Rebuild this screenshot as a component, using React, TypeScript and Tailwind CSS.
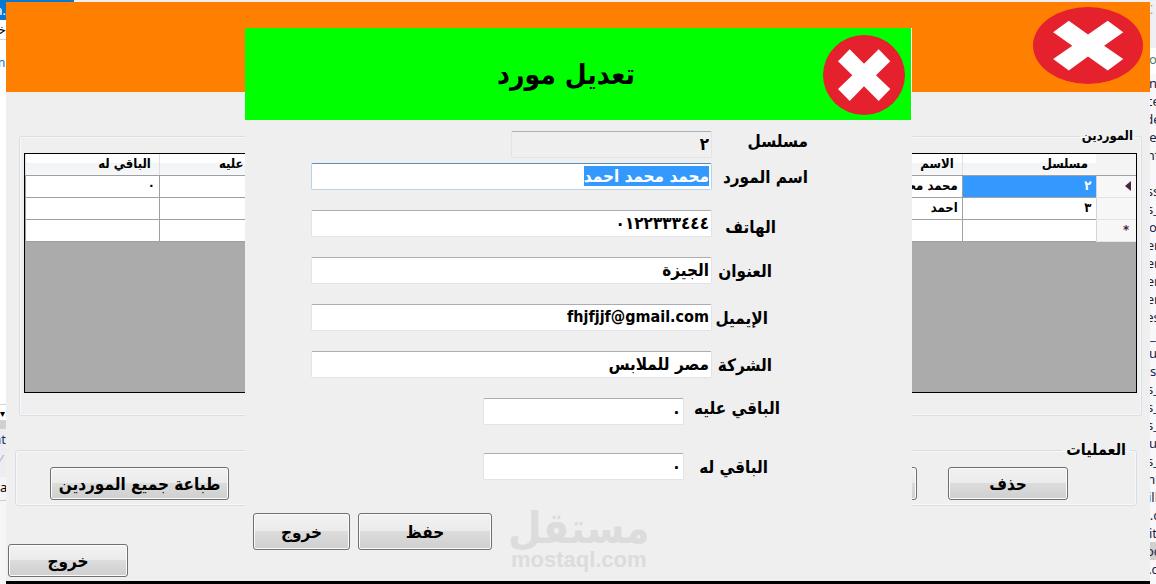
import { useEffect, useRef } from 'react'
import type { ReactNode } from 'react'

interface Supplier {
  id: string
  name: string
  phone: string
  address: string
  email: string
  company: string
  owed: string
  due: string
}

const COLUMNS: { key: keyof Supplier; title: string }[] = [
  { key: 'id', title: 'مسلسل' },
  { key: 'name', title: 'الاسم' },
  { key: 'phone', title: 'الهاتف' },
  { key: 'address', title: 'العنوان' },
  { key: 'email', title: 'الإيميل' },
  { key: 'company', title: 'الشركة' },
  { key: 'owed', title: 'الباقي عليه' },
  { key: 'due', title: 'الباقي له' },
]

const SUPPLIERS: Supplier[] = [
  { id: '٢', name: 'محمد محمد احمد', phone: '', address: '', email: '', company: '', owed: '', due: '٠' },
  { id: '٣', name: 'احمد', phone: '', address: '', email: '', company: '', owed: '', due: '' },
  { id: '', name: '', phone: '', address: '', email: '', company: '', owed: '', due: '' },
]

const EDITOR_LINES = [
  'n', 'ce', 'de', 'e', 'nf', '', 'ss', 's_', 'o', 'er', 'er', 'er', 'er', 'es', '_', 'u', 's',
  's_', 's_', 's_', 'u', 's_', 'n.', 'ill', ':.c', 'it', 'oc', '.c',
]

function CloseIcon({ className }: { className: string }) {
  return (
    <svg viewBox="0 0 82 80" preserveAspectRatio="none" className={className} aria-hidden="true">
      <ellipse cx="41" cy="40" rx="41" ry="40" fill="#e5212d" />
      <path
        d="M26.7 14.3 41 28.7 55.7 14.3 67.3 26.3 53 40.3 67.3 54 55.7 66 41 51.3 26.7 66 15 54 29.3 40.3 15 26.3z"
        fill="#fff"
      />
    </svg>
  )
}

function WinButton({ className, children }: { className: string; children: ReactNode }) {
  return (
    <button
      type="button"
      className={`rounded-[3px] border border-[#707070] bg-[linear-gradient(#f2f2f2,#ebebeb_48%,#dcdcdc_50%,#cfcfcf)] text-center text-[17px] leading-5 font-bold whitespace-nowrap shadow-[inset_0_0_0_1px_#fbfbfb] ${className}`}
    >
      {children}
    </button>
  )
}

interface FieldProps {
  id: string
  label: string
  value: string
  labelClass: string
  inputClass: string
  rowClass?: string
  selected?: boolean
  readOnly?: boolean
  ltr?: boolean
}

function Field({ id, label, value, labelClass, inputClass, rowClass = 'items-center', selected, readOnly, ltr }: FieldProps) {
  const ref = useRef<HTMLInputElement>(null)

  useEffect(() => {
    if (selected) {
      ref.current?.focus()
      ref.current?.select()
    }
  }, [selected])

  return (
    <div className={`flex ${rowClass}`}>
      <label htmlFor={id} className={`shrink-0 text-[17px] leading-5 font-bold whitespace-nowrap ${labelClass}`}>
        {label}
      </label>
      <input
        ref={ref}
        id={id}
        type="text"
        defaultValue={value}
        readOnly={readOnly}
        dir={ltr ? 'ltr' : 'rtl'}
        className={`h-[27px] rounded-[2px] border px-0.5 pb-0.5 text-right leading-5 font-bold outline-none selection:bg-[#3399ff] selection:text-white ${
          ltr ? 'text-base' : 'text-[17px]'
        } ${
          selected ? 'border-[#b7d5ea] border-t-[#5e8cb8]' : 'border-[#e2e3ea] border-t-[#abadb3]'
        } ${readOnly ? 'bg-[#efefef]' : 'bg-white'} ${inputClass}`}
      />
    </div>
  )
}

function SupplierGrid() {
  return (
    <div className="h-60 overflow-hidden border border-black bg-[#ababab]">
      <table className="w-full table-fixed border-collapse text-[13px] leading-4 font-bold">
        <thead>
          <tr className="h-[21px]">
            <th className="w-10 border-b border-[#a0a0a0] bg-[#f4f4f4]" aria-label="#" />
            {COLUMNS.map((c) => (
              <th
                key={c.key}
                scope="col"
                className="border-b border-l border-b-[#a0a0a0] border-l-[#dedfe1] bg-[linear-gradient(#fff_40%,#f2f3f4_45%,#f6f7f8)] ps-2 text-start"
              >
                {c.title}
              </th>
            ))}
          </tr>
        </thead>
        <tbody>
          {SUPPLIERS.map((s, row) => (
            <tr key={row} className="h-[22px] bg-white">
              <th className="border-b border-l border-b-[#e3e3e3] border-l-[#d5d5d5] bg-[#f7f7f7] ps-[5px] text-start text-[#4a2440]">
                {row === 0 && (
                  <svg viewBox="0 0 6 10" className="h-[10px] w-[6px]" aria-hidden="true">
                    <path d="M6 0v10L0 5z" fill="currentColor" />
                  </svg>
                )}
                {row === 2 && <span className="ps-0.5">*</span>}
              </th>
              {COLUMNS.map((c) => (
                <td
                  key={c.key}
                  className={`overflow-hidden border-b border-l border-[#a0a0a0] ps-1 whitespace-nowrap ${
                    row === 0 && c.key === 'id' ? 'bg-[#3399ff] text-white' : ''
                  }`}
                >
                  {s[c.key]}
                </td>
              ))}
            </tr>
          ))}
        </tbody>
      </table>
    </div>
  )
}

function EditDialog() {
  return (
    <section role="dialog" aria-labelledby="dialog-title" className="w-[667px] bg-[#efefef]">
      <header className="flex h-[92px] items-center border-r border-white bg-[#00ff00] ps-1.5 pt-0.5">
        <button type="button" aria-label="إغلاق" className="shrink-0">
          <CloseIcon className="h-20 w-[82px]" />
        </button>
        <h2 id="dialog-title" className="flex-1 pe-16 text-center text-[28px] leading-9 font-bold">
          تعديل مورد
        </h2>
      </header>

      <form className="flex flex-col pt-[11px]">
        <Field id="serial" label="مسلسل" value="٢" readOnly rowClass="items-start" labelClass="w-50 ps-26" inputClass="w-[201px]" />
        <div className="flex flex-col gap-5 pt-[5px]">
          <Field id="name" label="اسم المورد" value="محمد محمد احمد" selected labelClass="w-50 ps-26" inputClass="w-[401px]" />
          <Field id="phone" label="الهاتف" value="٠١٢٢٣٣٣٤٤٤" rowClass="items-end" labelClass="w-50 ps-34" inputClass="w-[401px]" />
          <Field id="address" label="العنوان" value="الجيزة" labelClass="w-50 ps-35" inputClass="w-[401px]" />
          <Field id="email" label="الإيميل" value="fhjfjjf@gmail.com" ltr labelClass="w-50 ps-36" inputClass="w-[401px]" />
          <Field id="company" label="الشركة" value="مصر للملابس" labelClass="w-50 ps-35" inputClass="w-[401px]" />
          <Field id="owed" label="الباقي عليه" value="٠" rowClass="items-start" labelClass="w-57 ps-33" inputClass="w-[201px]" />
        </div>
        <div className="pt-7">
          <Field id="due" label="الباقي له" value="٠" labelClass="w-57 ps-36" inputClass="w-[201px]" />
        </div>

        <div dir="ltr" className="flex items-start gap-2 pt-7 pl-2">
          <WinButton className="mt-[5px] h-[37px] w-[97px]">خروج</WinButton>
          <WinButton className="mt-[5px] h-[37px] w-[134px]">حفظ</WinButton>
          <div className="ml-2 flex flex-col items-center text-[#dcdcdc]">
            <span className="text-[43px] leading-10 font-bold">مستقل</span>
            <span className="font-['Liberation_Sans'] text-[22px] leading-6 font-bold">mostaql.com</span>
          </div>
        </div>
      </form>
    </section>
  )
}

export default function App() {
  return (
    <div className="relative flex min-h-screen overflow-hidden bg-white font-['DejaVu_Sans_Condensed','DejaVu_Sans',sans-serif] text-black">
      <aside className="flex w-1.5 shrink-0 flex-col overflow-hidden font-['Noto_Sans'] text-[13px] leading-5">
        <div className="flex h-5 justify-end bg-[#0a77d0] text-white">a.</div>
        <div className="flex h-5 justify-end border-b border-[#ccd3db] bg-white font-['DejaVu_Sans']">خل</div>
        <div className="flex justify-center pt-3 text-[#1673c8]">me</div>
        <div className="h-[333px] border-b border-[#c9d6e4]" />
        <div className="h-4 border-b border-[#c9d6e4] text-[10px] leading-4">▾</div>
        <div className="h-2 bg-[#d0d0d0]" />
        <div className="flex justify-end bg-[#ececf2] text-[#23324f]">at</div>
        <div className="h-7 bg-[#ececf2] text-[#aaaaaa]">⁄</div>
        <div className="h-6 border-b border-[#cccccc] bg-[#f5f5f5]">a</div>
        <div className="flex-1 bg-[#f5f5f5]" />
      </aside>

      <div className="flex min-w-0 flex-1 flex-col bg-[#efefef]">
        <div className="h-0.5 bg-[#f0f0f4]">
          <div className="h-0.5 w-17 bg-[#0a77d0]" />
        </div>
        <main dir="rtl" className="flex flex-1 flex-col border-b-[3px] border-black">
          <header className="flex h-[90px] items-start bg-[#ff8000] ps-[7px] pt-[5px]">
            <button type="button" aria-label="إغلاق">
              <CloseIcon className="h-[77px] w-[110px]" />
            </button>
          </header>

          <fieldset className="ms-2 me-[13px] mt-[34px] min-w-0 rounded-[3px] border border-[#d5dfe5] ps-1 pe-1 pt-[7px] pb-[22px] shadow-[inset_0_0_0_1px_#f8f8f8]">
            <legend className="ms-0.5 px-0.5 text-[13px] leading-5 font-bold">الموردين</legend>
            <SupplierGrid />
          </fieldset>

          <fieldset className="ms-[13px] me-[9px] mt-[22px] min-w-0 rounded-[3px] border border-[#d5dfe5] ps-[68px] pe-[34px] pt-[5px] pb-[5px] shadow-[inset_0_0_0_1px_#f8f8f8]">
            <legend className="-ms-[62px] px-1 text-base leading-6 font-bold">العمليات</legend>
            <div className="flex gap-[31px]">
              <WinButton className="h-[33px] w-30">حذف</WinButton>
              <WinButton className="h-[33px] w-30">تعديل</WinButton>
              <WinButton className="ms-auto h-[33px] w-[179px]">طباعة جميع الموردين</WinButton>
            </div>
          </fieldset>

          <div className="mt-auto flex justify-end pe-0.5 pb-1">
            <WinButton className="h-[33px] w-30">خروج</WinButton>
          </div>
        </main>
      </div>

      <aside className="w-1.5 shrink-0 overflow-hidden bg-[#f8f8fa] font-['Noto_Sans'] text-[13px] leading-[18px] text-[#1b2340]">
        <div className="h-12 bg-[#f0f0f4] text-[#999999]">⁚</div>
        <div className="flex h-[26px] justify-center bg-white pt-0.5 text-[#4f7f6a]">o</div>
        {EDITOR_LINES.map((line, i) => (
          <div key={i} className={`flex h-[18px] justify-center ${line === 'oc' ? 'bg-[#d0d0d0]' : ''}`}>
            {line}
          </div>
        ))}
      </aside>

      <div dir="rtl" className="absolute inset-x-0 top-7 bottom-[3px] flex justify-center pl-px">
        <EditDialog />
      </div>
    </div>
  )
}
